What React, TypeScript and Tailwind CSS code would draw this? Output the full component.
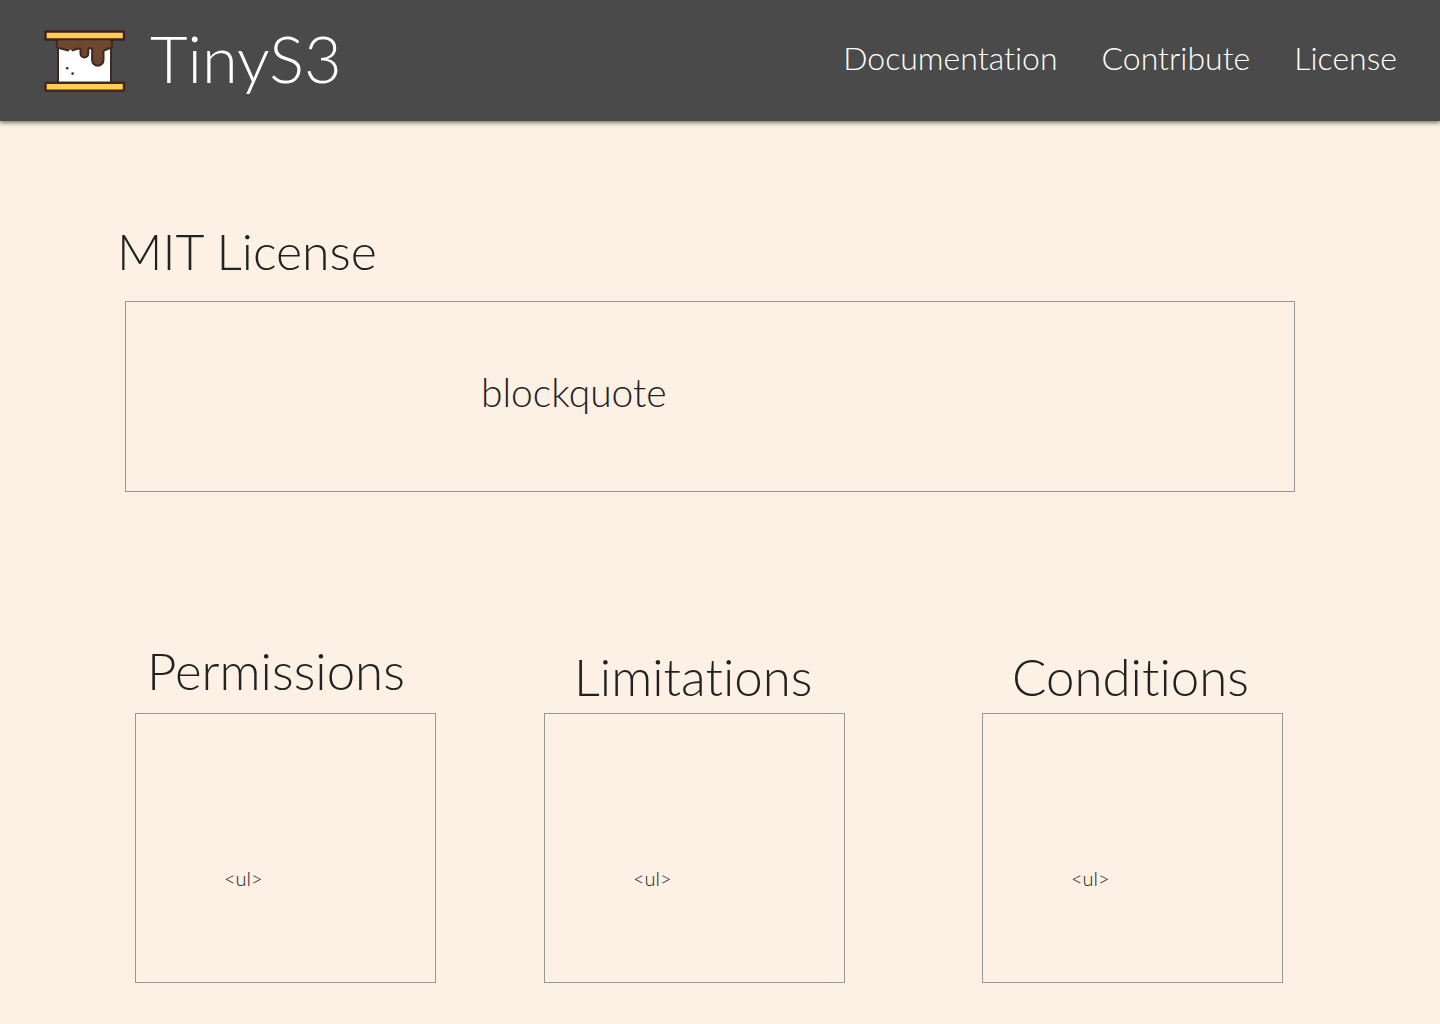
const columns = [
  { title: "Permissions", place: "col-start-1", heading: "pl-3 pb-3" },
  { title: "Limitations", place: "col-start-3", heading: "pl-[30px] pb-1.5" },
  { title: "Conditions", place: "col-start-5", heading: "pl-[30px] pb-1.5" },
];

function Logo() {
  return (
    <svg className="h-16 w-[82px] shrink-0" viewBox="0 0 82 64" aria-hidden="true">
      <rect x="14" y="10" width="53" height="44" fill="#fff" stroke="#42291f" strokeWidth="2" />
      <path
        d="M12.8 11.5H68V18.5Q63 19.8 59.5 21.8V31A5.7 5.7 0 0 1 48.1 31V20Q46 18.2 44.3 20V24.5A3.9 3.9 0 0 1 36.5 24.5V19.5Q33 19.5 28.6 21.4L26.5 20.8 24.3 21.4Q19 19.5 12.8 18.5Z"
        fill="#6d4730"
      />
      <path
        d="M12.8 11.5V18.5Q19 20.2 24.3 21.4M28.6 21.4Q33 19.7 36.5 19.5V24.5A3.9 3.9 0 0 0 44.3 24.5V20Q46 18.2 48.1 20V31A5.7 5.7 0 0 0 59.5 31V21.8Q63 19.8 68 18.5V11.5"
        fill="none"
        stroke="#42291f"
        strokeWidth="2"
        strokeLinecap="round"
        strokeLinejoin="round"
      />
      <circle cx="23.2" cy="39.2" r="1.3" fill="#42291f" />
      <circle cx="28.6" cy="44.6" r="1.3" fill="#42291f" />
      <rect x="1.5" y="2.5" width="78.5" height="8" fill="#ffcc57" stroke="#42201a" strokeWidth="2.4" strokeLinejoin="round" />
      <rect x="1.5" y="53.8" width="78.5" height="8" fill="#ffcc57" stroke="#42291f" strokeWidth="2.4" strokeLinejoin="round" />
    </svg>
  );
}

export default function App() {
  return (
    <div className="min-h-screen bg-[#fdf0e4] pb-10 font-['Lato',sans-serif] font-light text-[#222] [font-variant-ligatures:none]">
      <header className="flex items-center justify-between bg-[#4a4a4a] pr-[43px] pl-11 text-white shadow-[0_2px_4px_rgba(0,0,0,0.5)]">
        <a href="#" className="flex items-center gap-6">
          <Logo />
          <span className="pb-1 text-[65px] leading-[117px]">TinyS3</span>
        </a>
        <nav className="flex gap-11 pb-1.5 text-[32px] leading-10">
          <a href="#documentation">Documentation</a>
          <a href="#contribute">Contribute</a>
          <a href="#license">License</a>
        </nav>
      </header>

      <main>
        <section className="pt-[100px] pr-[145px] pl-[125px]">
          <h1 className="-ml-2 pb-5 text-[50px] leading-[60px]">MIT License</h1>
          <blockquote className="border border-[#979797] pt-[62px] pb-[70px] pl-[355px] text-[39px] leading-[57px]">
            blockquote
          </blockquote>
        </section>

        <section className="grid grid-cols-[301fr_108fr_301fr_137fr_301fr] items-end pt-[149px] pr-[157px] pl-[135px]">
          {columns.map(({ title, place, heading }) => (
            <div key={title} className={place}>
              <h2 className={`${heading} text-[51px] leading-[60px]`}>{title}</h2>
              <div className="border border-[#979797] pt-[152px] pb-[92px] pl-[88px] text-[20px] leading-6">
                &lt;ul&gt;
              </div>
            </div>
          ))}
        </section>
      </main>
    </div>
  );
}
